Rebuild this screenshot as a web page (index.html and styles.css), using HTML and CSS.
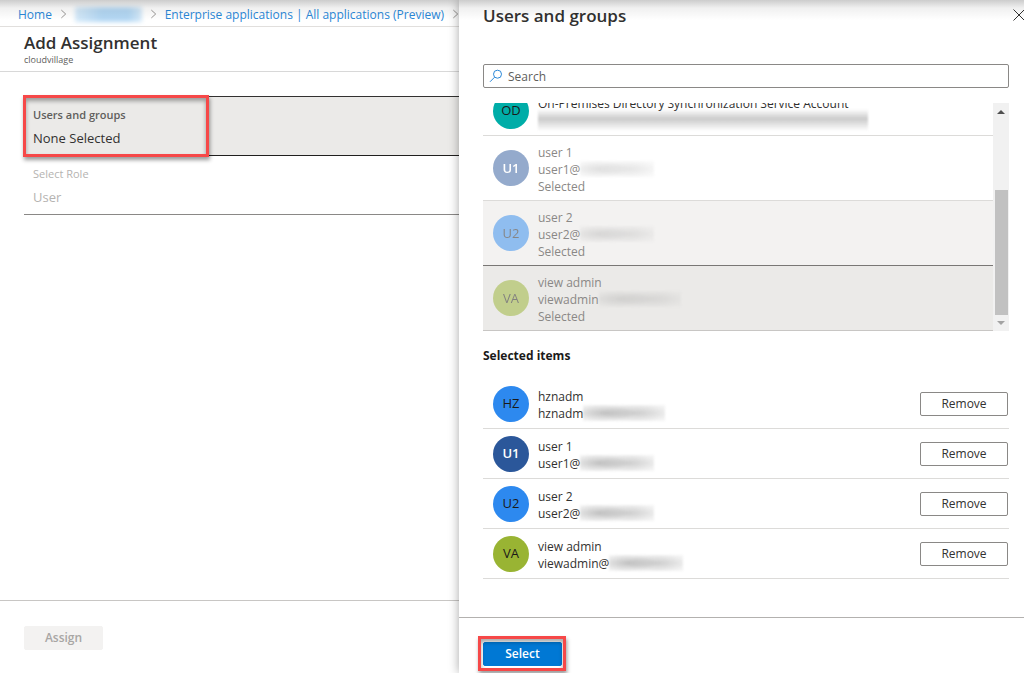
FILE: index.html
```html
<!DOCTYPE html>
<html lang="en">
<head>
<meta charset="utf-8">
<title>Add Assignment</title>
<link rel="stylesheet" href="styles.css">
</head>
<body>
<div class="portal">
  <main class="blade">
    <nav class="breadcrumb" aria-label="Breadcrumb">
      <a href="#">Home</a>
      <svg class="chevron" viewBox="0 0 8 12"><path d="M1.5 1.5 6.5 6l-5 4.500"/></svg>
      <a href="#" class="smudge smudge-link" aria-label="Directory"></a>
      <svg class="chevron" viewBox="0 0 8 12"><path d="M1.5 1.5 6.5 6l-5 4.500"/></svg>
      <a href="#">Enterprise applications | All applications (Preview)</a>
      <svg class="chevron" viewBox="0 0 8 12"><path d="M1.5 1.5 6.5 6l-5 4.500"/></svg>
    </nav>
    <header class="blade-header">
      <h1>Add Assignment</h1>
      <p>cloudvillage</p>
    </header>
    <div class="steps">
      <button class="step step-active" type="button">
        <span class="step-label">Users and groups</span>
        <span class="step-value">None Selected</span>
      </button>
      <button class="step" type="button" disabled>
        <span class="step-label">Select Role</span>
        <span class="step-value">User</span>
      </button>
    </div>
    <footer class="blade-footer">
      <button class="button button-disabled" type="button" disabled>Assign</button>
    </footer>
  </main>

  <aside class="panel">
    <header class="panel-header">
      <h2>Users and groups</h2>
      <button class="close" type="button" aria-label="Close">
        <svg viewBox="0 0 12 12"><path d="M.5.5l11 11M11.500.5l-11 11"/></svg>
      </button>
    </header>
    <div class="panel-body">
      <label class="search">
        <svg viewBox="0 0 14 14"><circle cx="8.500" cy="5.200" r="4"/><path d="M5.600 8.200 1 12.800"/></svg>
        <input type="search" placeholder="Search" aria-label="Search">
      </label>

      <div class="picker">
        <ul class="people">
          <li class="person">
            <span class="avatar teal">OD</span>
            <div class="details">
              <div>On-Premises Directory Synchronization Service Account</div>
              <div class="mail"><span class="smudge smudge-long"></span></div>
            </div>
          </li>
          <li class="person picked">
            <span class="avatar navy">U1</span>
            <div class="details">
              <div>user 1</div>
              <div class="mail">user1@<span class="smudge smudge-short"></span></div>
              <div>Selected</div>
            </div>
          </li>
          <li class="person picked hovered">
            <span class="avatar blue">U2</span>
            <div class="details">
              <div>user 2</div>
              <div class="mail">user2@<span class="smudge smudge-short"></span></div>
              <div>Selected</div>
            </div>
          </li>
          <li class="person picked focused">
            <span class="avatar green">VA</span>
            <div class="details">
              <div>view admin</div>
              <div class="mail">viewadmin<span class="smudge"></span></div>
              <div>Selected</div>
            </div>
          </li>
        </ul>
        <div class="scrollbar" aria-hidden="true">
          <svg class="arrow" viewBox="0 0 8 4"><path d="M0 4 4 0l4 4z"/></svg>
          <div class="track"><div class="thumb"></div></div>
          <svg class="arrow arrow-off" viewBox="0 0 8 4"><path d="M0 0h8L4 4z"/></svg>
        </div>
      </div>

      <h3>Selected items</h3>
      <ul class="people">
        <li class="person">
          <span class="avatar blue">HZ</span>
          <div class="details">
            <div>hznadm</div>
            <div class="mail">hznadm<span class="smudge"></span></div>
          </div>
          <button class="button remove" type="button">Remove</button>
        </li>
        <li class="person">
          <span class="avatar navy">U1</span>
          <div class="details">
            <div>user 1</div>
            <div class="mail">user1@<span class="smudge smudge-short"></span></div>
          </div>
          <button class="button remove" type="button">Remove</button>
        </li>
        <li class="person">
          <span class="avatar blue">U2</span>
          <div class="details">
            <div>user 2</div>
            <div class="mail">user2@<span class="smudge smudge-short"></span></div>
          </div>
          <button class="button remove" type="button">Remove</button>
        </li>
        <li class="person">
          <span class="avatar green">VA</span>
          <div class="details">
            <div>view admin</div>
            <div class="mail">viewadmin@<span class="smudge smudge-short"></span></div>
          </div>
          <button class="button remove" type="button">Remove</button>
        </li>
      </ul>
    </div>
    <footer class="panel-footer">
      <button class="button select" type="button">Select</button>
    </footer>
  </aside>
</div>
</body>
</html>
```
FILE: styles.css
```css
*, *::before, *::after { box-sizing: border-box; }

body {
  margin: 0;
  background: #fff;
  color: #323130;
  font: 12px/17px "Open Sans", "Noto Sans", sans-serif;
}

h1, h2, h3, p, ul { margin: 0; padding: 0; }
ul { list-style: none; }
button, input { font: inherit; color: inherit; }
a { color: #2b88d8; text-decoration: none; }
svg { fill: none; stroke: currentColor; flex: none; }

.portal {
  position: relative;
  display: grid;
  grid-template-columns: minmax(0, 459fr) minmax(0, 565fr);
  min-height: 100vh;
}

/* Shade cast by the top bar over both columns */
.portal::before {
  content: "";
  position: absolute;
  inset: 0 0 auto;
  z-index: 2;
  height: 20px;
  background: linear-gradient(rgba(0, 0, 0, .2), rgba(0, 0, 0, .06) 40%, transparent);
  pointer-events: none;
}

.blade { display: flex; flex-direction: column; }

.breadcrumb {
  display: flex;
  align-items: center;
  gap: 8px;
  height: 27px;
  padding: 2px 0 0 18px;
  border-bottom: 1px solid #e1dfdd;
  white-space: nowrap;
  overflow: hidden;
}
.chevron { width: 7px; height: 12px; color: #8a8886; }

.blade-header {
  height: 45px;
  padding: 5px 24px 0;
  border-bottom: 1px solid #d8d8d8;
}
.blade-header h1 { font-size: 17px; line-height: 22px; font-weight: 600; color: #323130; }
.blade-header p { font-size: 9px; line-height: 12px; color: #605e5c; }

.steps { flex: 1; padding: 24px 0 0 24px; }
.step {
  position: relative;
  display: flex;
  flex-direction: column;
  gap: 7px;
  width: 100%;
  padding: 9px 9px 8px;
  border: 0;
  border-bottom: 1px solid #8a8886;
  background: none;
  text-align: left;
}
.step:disabled { color: #b5b3b1; }
.step-label { font-size: 11px; }
.step-value { font-size: 13px; }
.step-active {
  border-top: 1px solid #323130;
  border-bottom-color: #201f1e;
  background: #ebeae8;
}
.step-active .step-label { font-weight: 600; color: #605e5c; }

/* Red callout frames */
.step-active::after, .select::after {
  content: "";
  position: absolute;
  border: 3px solid #f64848;
  box-shadow: 1px 3px 4px rgba(0, 0, 0, .4), inset 0 3px 4px rgba(0, 0, 0, .35);
  pointer-events: none;
}
.step-active::after { inset: -2px auto -2px -1px; width: 186px; }
.select::after { inset: -7px -5px -6px -6px; }

.button {
  height: 24px;
  padding: 0;
  border: 1px solid #8a8886;
  border-radius: 2px;
  background: #fff;
  line-height: 20px;
}
.blade-footer { height: 73px; padding: 25px 24px; border-top: 1px solid #c8c6c4; }
.button-disabled {
  width: 79px;
  border-color: #f3f2f1;
  background: #f3f2f1;
  color: #a8a6a4;
  font-weight: 600;
}

.panel {
  position: relative;
  z-index: 1;
  display: flex;
  flex-direction: column;
  background: #fff;
  box-shadow: 0 0 10px rgba(0, 0, 0, .35);
}
.panel-header {
  display: flex;
  justify-content: space-between;
  height: 64px;
  padding: 5px 0 0 24px;
  overflow: hidden;
}
.panel-header h2 { font-size: 17px; line-height: 22px; font-weight: 600; color: #323130; }
.close { width: 11px; height: 20px; padding: 0; border: 0; background: none; }
.close svg { display: block; width: 12px; height: 12px; }

.panel-body { flex: 1; padding: 0 15px 0 24px; }
.search {
  display: flex;
  align-items: center;
  gap: 5px;
  height: 24px;
  padding: 0 5px;
  border: 1px solid #8a8886;
  border-radius: 2px;
}
.search svg { width: 14px; height: 14px; color: #2b88d8; }
.search input { flex: 1; min-width: 0; padding: 0; border: 0; outline: 0; background: none; }
.search input::placeholder { color: #605e5c; opacity: 1; }

/* The list rests at the end of its scroll range */
.picker { display: flex; height: 228px; margin-top: 15px; overflow: hidden; }
.picker .people {
  flex: 1;
  display: flex;
  flex-direction: column;
  justify-content: flex-end;
}
.person {
  display: flex;
  align-items: center;
  gap: 9px;
  flex: none;
  min-height: 50px;
  padding: 0 1px 0 10px;
  border-bottom: 1px solid #dcdbd9;
}
.picked { min-height: 65px; }
.picked .avatar { opacity: .5; }
.picked .details { color: #8a8886; }
.picked .smudge { opacity: .5; }
.hovered { background: #f3f2f1; border-bottom-color: #797775; }
.focused { background: #ebeae8; border-bottom-color: #c8c6c4; }

.avatar {
  display: grid;
  place-items: center;
  width: 36px;
  height: 36px;
  border-radius: 50%;
  font-size: 13px;
  color: #1b1a19;
}
.teal { background: #00ada8; }
.navy { background: #2b579a; color: #fff; font-weight: 600; }
.blue { background: #2d89ef; }
.green { background: #99b433; }

.details { flex: 1; min-width: 0; padding-top: 2px; }
.mail { display: flex; align-items: center; height: 17px; }

/* Obscured address text */
.smudge {
  width: 82px;
  height: 16px;
  background: radial-gradient(ellipse 40% 55% at 25% 50%, rgba(120, 120, 120, .4), transparent),
    radial-gradient(ellipse 45% 55% at 65% 50%, rgba(130, 130, 130, .35), transparent),
    rgba(200, 200, 200, .2);
  filter: blur(1px);
}
.smudge-short { width: 74px; }
.smudge-long {
  width: 330px;
  height: 22px;
  flex: none;
  background: linear-gradient(transparent, rgba(140, 140, 140, .45) 45%, transparent);
}
.smudge-link {
  width: 72px;
  height: 15px;
  background: linear-gradient(90deg, #d5e9f8, #b3d7f3 40%, #b3d7f3 80%, #d5e9f8);
  filter: blur(2px);
}

.scrollbar {
  display: flex;
  flex-direction: column;
  align-items: center;
  width: 16px;
  padding: 7px 1px 6px;
  background: #f1f1f1;
}
.arrow { width: 8px; height: 4px; fill: #505050; stroke: none; }
.arrow-off { fill: #a3a3a3; }
.track {
  flex: 1;
  display: flex;
  flex-direction: column;
  justify-content: flex-end;
  width: 13px;
  margin: 6px 0;
}
.thumb { height: 64%; background: #c1c1c1; }

.panel-body h3 { margin: 16px 0 15px; font-size: 12px; font-weight: 700; color: #1b1a19; }
.remove { width: 88px; }

.panel-footer { height: 56px; padding: 24px 24px 0; border-top: 1px solid #b3b1af; }
.select {
  position: relative;
  width: 79px;
  border-color: #0078d4;
  background: #0078d4;
  color: #fff;
  font-weight: 600;
}
```
